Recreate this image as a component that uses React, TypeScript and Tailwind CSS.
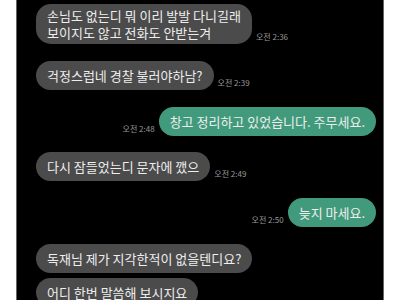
const font = { fontFamily: '"Noto Sans CJK KR", "Noto Sans", sans-serif' }

type Msg = { text: string[]; mine?: boolean; time?: string; mt: string }

const messages: Msg[] = [
  { text: ['손님도 없는디 뭐 이리 발발 다니길래', '보이지도 않고 전화도 안받는겨'], time: '오전 2:36', mt: 'mt-[4px]' },
  { text: ['걱정스럽네 경찰 불러야하남?'], time: '오전 2:39', mt: 'mt-[17px]' },
  { text: ['창고 정리하고 있었습니다. 주무세요.'], mine: true, time: '오전 2:48', mt: 'mt-[17px]' },
  { text: ['다시 잠들었는디 문자에 깼으'], time: '오전 2:49', mt: 'mt-[16px]' },
  { text: ['늦지 마세요.'], mine: true, time: '오전 2:50', mt: 'mt-[17px]' },
  { text: ['독재님 제가 지각한적이 없을텐디요?'], mt: 'mt-[17px]' },
  { text: ['어디 한번 말씀해 보시지요'], mt: 'mt-[5px]' },
]

function Bubble({ m }: { m: Msg }) {
  const bubble = (
    <div
      className={`rounded-[15px] px-[11px] text-[13px] leading-[17px] text-[#eeeeee] ${
        m.text.length > 1 ? 'py-[3px]' : 'py-[6px]'
      } ${m.mine ? 'bg-[#419a7b]' : 'bg-[#4b4b4b]'}`}
    >
      {m.text.map((t, i) => (
        <div key={i}>{t}</div>
      ))}
    </div>
  )
  const time = m.time ? (
    <span className="mb-[2px] text-[8px] leading-[10px] text-[#999999]">{m.time}</span>
  ) : null
  return (
    <div className={`flex items-end gap-[4px] ${m.mine ? 'justify-end' : 'justify-start'} ${m.mt}`}>
      {m.mine ? time : null}
      {bubble}
      {m.mine ? null : time}
    </div>
  )
}

export default function App() {
  return (
    <div className="h-[300px] w-[400px] overflow-hidden bg-white pl-[16px] pr-[16px]" style={font}>
      <div className="flex h-full flex-col border-x border-[#666666] bg-black pl-[19px] pr-[7px]">
        {messages.map((m, i) => (
          <Bubble key={i} m={m} />
        ))}
      </div>
    </div>
  )
}
